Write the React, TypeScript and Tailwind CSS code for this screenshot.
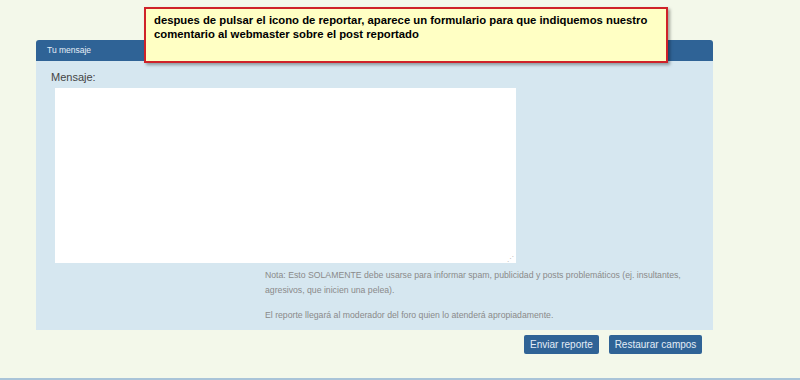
export default function App() {
  return (
    <div
      className="relative flex h-[380px] w-[800px] flex-col overflow-hidden bg-[#f3f8ea]"
      style={{ fontFamily: '"Liberation Sans", Arial, sans-serif' }}
    >
      <div className="pl-[36px] pt-[40px]">
        <div className="w-[677px]">
          <div className="h-[21px] rounded-t-[3px] bg-[#2f6396] pl-[11px] text-[8.5px] leading-[21px] text-[#e6eef6]">
            Tu mensaje
          </div>
          <div className="flex h-[269px] flex-col bg-[#d6e7f0]">
            <div className="pl-[15px] pt-[9px] text-[11px] leading-[14px] text-[#444]">Mensaje:</div>
            <div className="relative ml-[19px] mt-[4px] h-[175px] w-[461px] bg-white">
              <span className="absolute bottom-[1px] right-[2px] text-[7px] leading-none text-[#bbb]">⋰</span>
            </div>
            <div className="ml-[229px] mt-[5px] whitespace-nowrap text-[8.7px] leading-[15px] text-[#8a8a8a]">
              <p>Nota: Esto SOLAMENTE debe usarse para informar spam, publicidad y posts problemáticos (ej. insultantes,</p>
              <p>agresivos, que inicien una pelea).</p>
              <p className="mt-[10px]">El reporte llegará al moderador del foro quien lo atenderá apropiadamente.</p>
            </div>
          </div>
          <div className="flex justify-end gap-[10px] pr-[11px] pt-[5px]">
            <button className="h-[19px] w-[75px] whitespace-nowrap rounded-[2px] bg-[#2f6396] text-[10px] leading-[19px] text-[#e3edf6]">
              Enviar reporte
            </button>
            <button className="h-[19px] w-[93px] whitespace-nowrap rounded-[2px] bg-[#2f6396] text-[10px] leading-[19px] text-[#e3edf6]">
              Restaurar campos
            </button>
          </div>
        </div>
      </div>
      <div className="flex-1" />
      <div className="h-[2px] bg-[#a9c4d8]" />

      <div className="absolute left-[144px] top-[7px] h-[56px] w-[524px] border-2 border-[#cf2229] bg-[#ffffc4] px-[8px] pt-[4px] text-[11.3px] font-bold leading-[14px] text-black shadow-[2px_2px_3px_rgba(0,0,0,0.35)]">
        despues de pulsar el icono de reportar, aparece un formulario para que indiquemos nuestro comentario al webmaster sobre el post reportado
      </div>
    </div>
  );
}
